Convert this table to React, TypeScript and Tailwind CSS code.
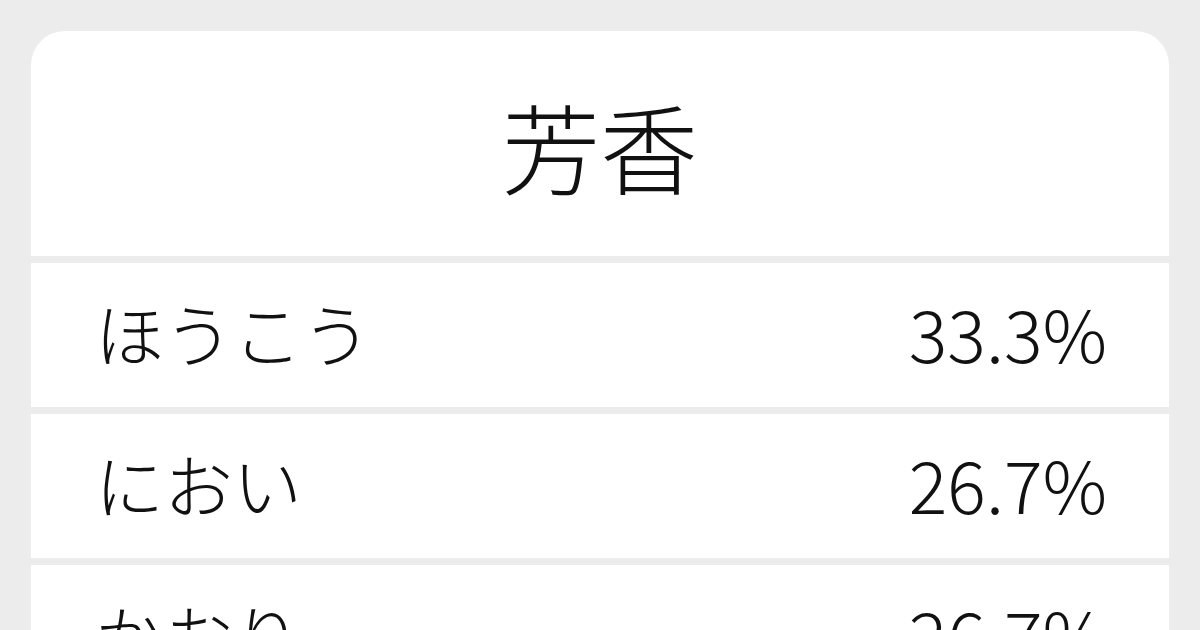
import React from "react";

const rows = [
  { reading: "ほうこう", ratio: "33.3%" },
  { reading: "におい", ratio: "26.7%" },
  { reading: "かおり", ratio: "26.7%" },
  { reading: "こうき", ratio: "13.3%" },
];

export default function App() {
  return (
    <div
      className="w-[1200px] h-[630px] overflow-hidden bg-[#ececec] px-[31px] pt-[31px] text-[#111]"
      style={{ fontFamily: '"Noto Sans CJK JP", "Noto Sans", sans-serif' }}
    >
      <div className="flex flex-col gap-[7px] rounded-[34px] overflow-hidden">
        {/* Title */}
        <div className="h-[225px] bg-white flex items-center justify-center">
          <h1 className="text-[98px] font-light leading-none">芳香</h1>
        </div>

        {/* Readings */}
        {rows.map((row) => (
          <div
            key={row.reading}
            className="h-[144px] bg-white flex items-center justify-between pl-[64px] pr-[62px] pb-[6px]"
          >
            <span className="text-[69px] font-light leading-none">{row.reading}</span>
            <span className="text-[72px] font-light leading-none">{row.ratio}</span>
          </div>
        ))}
      </div>
    </div>
  );
}
